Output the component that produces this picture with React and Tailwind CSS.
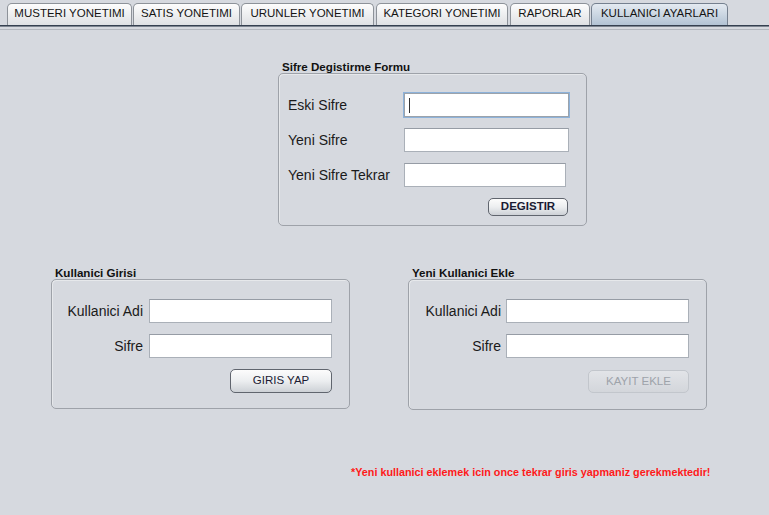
import React from 'react';

const tabs = [
  { label: 'MUSTERI YONETIMI', w: 'w-[125px]', ml: 'ml-[7px]' },
  { label: 'SATIS YONETIMI', w: 'w-[107px]', ml: 'ml-[1px]' },
  { label: 'URUNLER YONETIMI', w: 'w-[133px]', ml: 'ml-[1px]' },
  { label: 'KATEGORI YONETIMI', w: 'w-[132px]', ml: 'ml-[2px]' },
  { label: 'RAPORLAR', w: 'w-[80px]', ml: 'ml-[2px]' },
  { label: 'KULLANICI AYARLARI', w: 'w-[137px]', ml: 'ml-[1px]', active: true },
];

const Field = ({ className = '', focused }) => (
  <div
    className={
      'relative h-[24px] bg-white border ' +
      (focused
        ? 'border-[#9ca3ab] shadow-[0_0_0_1px_#8db2da] '
        : 'border-[#aab0b8] border-t-[#969ca5] ') +
      className
    }
  >
    {focused && <div className="absolute left-[4px] top-[4px] w-[1px] h-[15px] bg-[#333]"></div>}
  </div>
);

const Button = ({ children, className = '', disabled, bold }) => (
  <div
    className={
      'flex items-center justify-center rounded-[5px] border text-[11.5px] ' +
      (disabled
        ? 'border-[#c2c6cc] bg-gradient-to-b from-[#e2e4e8] to-[#d3d6db] text-[#9ea3aa] '
        : 'border-[#60656e] bg-gradient-to-b from-[#fcfcfc] via-[#eceef0] to-[#cdd1d6] text-[#1b1b33] ') +
      (bold ? 'font-bold ' : '') +
      className
    }
  >
    {children}
  </div>
);

const Titled = ({ title, children, className = '' }) => (
  <div className={className}>
    <div className="h-[12px] leading-[12px] pl-[4px] text-[11.6px] font-bold text-[#111]">{title}</div>
    <div className="rounded-[5px] border border-[#9ea2a9] shadow-[inset_1px_1px_0_#e6e8eb]">
      {children}
    </div>
  </div>
);

const Row = ({ label, labelW, gap, fieldW, focused, right }) => (
  <div className="flex items-center h-[24px]">
    <div
      className={'text-[14px] text-[#1a1a1a] ' + labelW + ' ' + (right ? 'text-right' : '')}
    >
      {label}
    </div>
    <div className={gap}></div>
    <Field className={fieldW} focused={focused} />
  </div>
);

export default function App() {
  return (
    <div className="w-[769px] h-[515px] bg-[#d6d9df] font-['Liberation_Sans',Arial,sans-serif] overflow-hidden">
      {/* tab strip */}
      <div className="flex items-end h-[25px]">
        {tabs.map((t) => (
          <div
            key={t.label}
            className={
              'h-[22px] flex items-center justify-center rounded-t-[5px] border border-b-0 text-[11.5px] text-[#141414] pb-[1px] ' +
              t.w + ' ' + t.ml + ' ' +
              (t.active
                ? 'border-[#75808f] bg-gradient-to-b from-[#e4eaf1] to-[#b3c3d4]'
                : 'border-[#8d9299] bg-gradient-to-b from-[#fdfdfd] to-[#dfe1e4]')
            }
          >
            {t.label}
          </div>
        ))}
      </div>
      <div className="h-[1px] bg-[#354050]"></div>
      <div className="h-[1px] bg-[#7d8590]"></div>
      <div className="h-[2px] bg-[#d6d9df]"></div>
      <div className="h-[1px] bg-[#b3b7be]"></div>

      <div className="flex flex-col">
        {/* sifre degistirme */}
        <Titled title="Sifre Degistirme Formu" className="ml-[278px] mt-[31px] w-[309px]">
          <div className="h-[151px] pl-[9px] pt-[19px]">
            <div className="flex flex-col gap-[11px]">
              <Row label="Eski Sifre" labelW="w-[116px]" gap="" fieldW="w-[165px]" focused />
              <Row label="Yeni Sifre" labelW="w-[116px]" gap="" fieldW="w-[165px]" />
              <Row label="Yeni Sifre Tekrar" labelW="w-[116px]" gap="" fieldW="w-[162px]" />
            </div>
            <div className="flex justify-end pr-[18px] mt-[11px]">
              <Button bold className="w-[80px] h-[18px]">DEGISTIR</Button>
            </div>
          </div>
        </Titled>

        <div className="flex mt-[41px]">
          <Titled title="Kullanici Girisi" className="ml-[51px] w-[299px]">
            <div className="h-[128px] pt-[19px]">
              <div className="flex flex-col gap-[11px]">
                <Row label="Kullanici Adi" labelW="w-[91px]" gap="w-[6px]" fieldW="w-[183px]" right />
                <Row label="Sifre" labelW="w-[91px]" gap="w-[6px]" fieldW="w-[183px]" right />
              </div>
              <div className="flex justify-end pr-[17px] mt-[11px]">
                <Button className="w-[102px] h-[24px]">GIRIS YAP</Button>
              </div>
            </div>
          </Titled>

          <Titled title="Yeni Kullanici Ekle" className="ml-[58px] w-[299px]">
            <div className="h-[129px] pt-[19px]">
              <div className="flex flex-col gap-[11px]">
                <Row label="Kullanici Adi" labelW="w-[92px]" gap="w-[5px]" fieldW="w-[183px]" right />
                <Row label="Sifre" labelW="w-[92px]" gap="w-[5px]" fieldW="w-[183px]" right />
              </div>
              <div className="flex justify-end pr-[17px] mt-[12px]">
                <Button disabled className="w-[101px] h-[23px]">KAYIT EKLE</Button>
              </div>
            </div>
          </Titled>
        </div>

        <div className="mt-[55px] pl-[351px] h-[14px] leading-[14px] text-[10.8px] font-bold text-[#ff1a1a] whitespace-nowrap">
          *Yeni kullanici eklemek icin once tekrar giris yapmaniz gerekmektedir!
        </div>
      </div>
    </div>
  );
}
